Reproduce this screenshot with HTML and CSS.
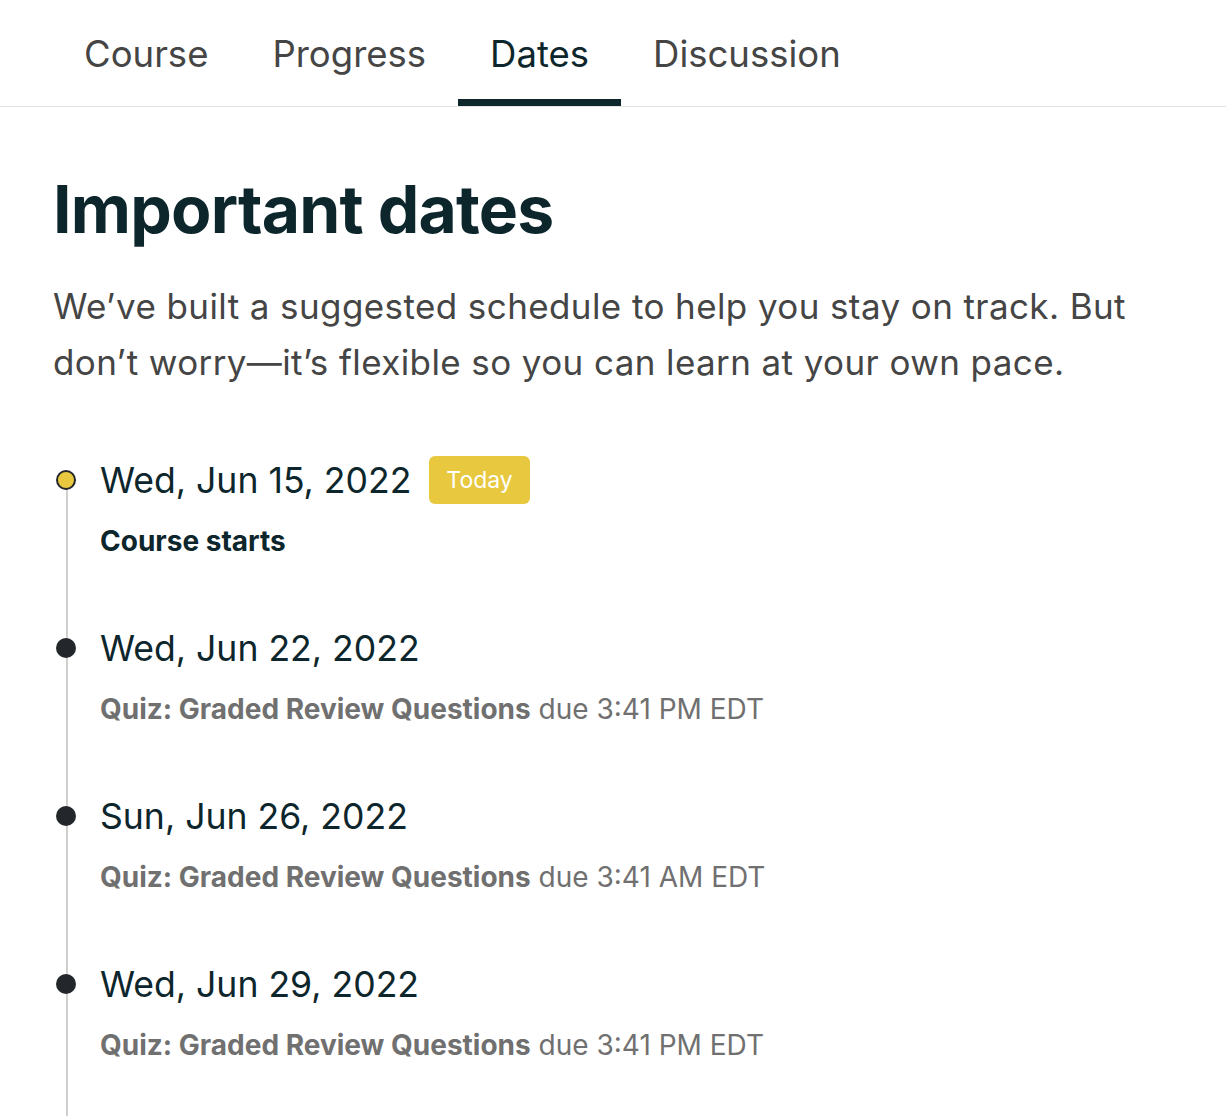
FILE: index.html
```html
<!DOCTYPE html>
<html lang="en">
<head>
<meta charset="utf-8">
<title>Dates</title>
<link rel="stylesheet" href="styles.css">
</head>
<body>
<nav class="tabs">
  <a class="tab">Course</a>
  <a class="tab">Progress</a>
  <a class="tab active">Dates</a>
  <a class="tab">Discussion</a>
</nav>
<main class="content">
  <h1 class="title">Important dates</h1>
  <p class="intro">We’ve built a suggested schedule to help you stay on track. But don’t worry—it’s flexible so you can learn at your own pace.</p>
  <ul class="timeline">
    <li class="item">
      <span class="dot today"></span>
      <div class="date-row"><span class="date">Wed, Jun 15, 2022</span><span class="badge">Today</span></div>
      <div class="detail strong">Course starts</div>
    </li>
    <li class="item">
      <span class="dot"></span>
      <div class="date-row"><span class="date">Wed, Jun 22, 2022</span></div>
      <div class="detail"><b>Quiz: Graded Review Questions</b> due 3:41 PM EDT</div>
    </li>
    <li class="item">
      <span class="dot"></span>
      <div class="date-row"><span class="date">Sun, Jun 26, 2022</span></div>
      <div class="detail"><b>Quiz: Graded Review Questions</b> due 3:41 AM EDT</div>
    </li>
    <li class="item">
      <span class="dot"></span>
      <div class="date-row"><span class="date">Wed, Jun 29, 2022</span></div>
      <div class="detail"><b>Quiz: Graded Review Questions</b> due 3:41 PM EDT</div>
    </li>
  </ul>
</main>
</body>
</html>
```

FILE: styles.css
```css
* { box-sizing: border-box; }
html, body { margin: 0; padding: 0; background: #fff; }
body {
  font-family: Inter, "Noto Sans", sans-serif;
  color: #0d262c;
  overflow: hidden;
  height: 1116px;
}
.tabs {
  display: flex;
  padding-left: 52px;
  height: 107px;
  border-bottom: 1px solid #e3e3e3;
}
.tab {
  display: flex;
  align-items: center;
  padding: 8px 32px 0;
  font-size: 36.5px;
  color: #454545;
  border-bottom: 7px solid transparent;
  text-decoration: none;
}
.tab.active {
  color: #0d262c;
  border-bottom-color: #0d262c;
}
.content {
  padding: 0 53px;
}
.title {
  margin: 62px 0 0;
  font-size: 66px;
  font-weight: 700;
  line-height: 80px;
  letter-spacing: -0.8px;
  color: #0d262c;
}
.intro {
  margin: 29px 0 0;
  font-size: 35px;
  letter-spacing: 0.4px;
  line-height: 56px;
  color: #454545;
}
.timeline {
  list-style: none;
  margin: 66px 0 0;
  padding: 0 0 0 47px;
  position: relative;
}
.timeline::before {
  content: "";
  position: absolute;
  left: 13px;
  top: 24px;
  bottom: -200px;
  width: 2px;
  background: #cfcfcf;
}
.item {
  position: relative;
  height: 168px;
}
.dot {
  position: absolute;
  left: -44px;
  top: 14px;
  width: 20px;
  height: 20px;
  border-radius: 50%;
  background: #23272b;
}
.dot.today {
  background: #e8c83f;
  border: 2px solid #23272b;
}
.date-row {
  display: flex;
  align-items: center;
  gap: 18px;
  height: 48px;
}
.date {
  font-size: 35.6px;
  color: #0d262c;
}
.badge {
  background: #e8c83f;
  color: #fff;
  font-size: 23px;
  padding: 0 17px;
  height: 48px;
  line-height: 48px;
  border-radius: 6px;
}
.detail {
  margin-top: 20px;
  font-size: 28px;
  line-height: 34px;
  color: #707070;
}
.detail b { font-weight: 700; }
.detail.strong {
  font-weight: 700;
  color: #0d262c;
}
```
